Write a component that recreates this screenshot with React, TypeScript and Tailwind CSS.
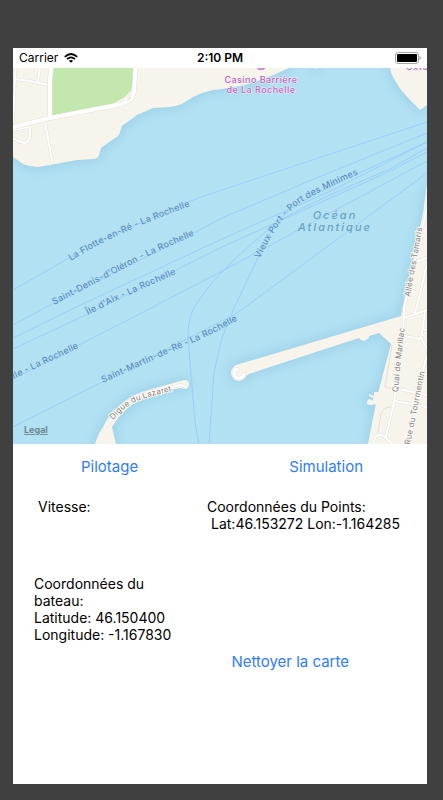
import React from "react";

const coastlines = [
  "M13 60V157L23 164Q30 167 38 167L50 165L77 160L94 159Q98 158 99 155L101 148L115 138Q119 136 120 132L122 126L137 115L153 108L170 107Q177 106 182 104L193 97Q203 92 213 90L222 89L245 85L271 76L289 68V60Z",
  "M314 60V68L316 69L318 68V60Z",
  "M390 60V68Q391 74 394 79L401 90L411 101L420 110L427 105V60Z",
  "M427 183L423 213L413 260L403 305L401 316L236 365Q231 368 231 373Q232 380 238 381Q244 381 246 376L249 374L359 338L361 340L364 341L369 338V336L379 333L391 344L378 393L368 444H427Z",
  "M95 444Q98 434 103 427Q107 418 114 411Q123 402 128 399Q135 394 145 391L184 380Q189 380 189 384Q189 389 185 389L180 388L160 392L140 400Q128 406 118 418L112 427L116 444Z",
  "M368 399L373 400V398L369 396V394L374 396V392H380L378 404L371 405Q366 405 367 402Z",
];

const ferryRoutes = [
  "M13 290L69 258Q110 236 188 202Q205 195 222 190L427 122",
  "M13 325L52 304Q100 280 194 233L222 218L314 179L427 133",
  "M13 338L72 309L222 239L333 190L427 142",
  "M13 349L90 313L222 247L388 172L427 152",
  "M13 379L79 345L157 305L222 271L427 161",
  "M13 427L102 382L234 315L248 305L427 173",
  "M199 444L195 422L190 362L188 332Q189 314 197 303Q205 290 222 272Q250 243 284 218Q320 198 388 170L427 148",
  "M209 444L214 372L222 338L234 308L256 262Q272 222 295 205L335 184L427 142",
];

const minorRoads = [
  "M16 60L15 79L13 122",
  "M15 79L30 81L48 85",
  "M38 82L40 68V60",
  "M13 130L30 127V136Q29 142 24 143Q18 142 13 138",
  "M45 121L52 161",
  "M418 261L427 258",
  "M427 263L421 290L415 313",
  "M404 318L427 310",
  "M425 312L421 338L427 348",
  "M404 336L421 339",
  "M423 329L427 330",
  "M398 389L427 395",
  "M395 401L427 407",
  "M427 355L424 366L409 444",
  "M373 444L375 438Q378 434 382 435L393 444",
  "M427 207L404 308L403 337L394 402L386 437",
];

const majorRoads = [
  "M13 127L50 118L112 106L122 104L131 99Q134 96 134 90L136 60",
  "M50 118V80L52 60",
];

const routeLabels = [
  { id: "flotte", d: "M71 261Q125 226 230 193", text: "La Flotte-en-Ré - La Rochelle" },
  { id: "denis", d: "M54 305Q90 286 125 268Q165 246 230 221", text: "Saint-Denis-d'Oléron - La Rochelle" },
  { id: "aix", d: "M88 315Q135 290 220 256", text: "Île d'Aix - La Rochelle" },
  { id: "ille", d: "M12 380Q45 363 120 329", text: "ille - La Rochelle" },
  { id: "martin", d: "M103 383Q150 361 190 344Q220 331 270 302", text: "Saint-Martin-de-Ré - La Rochelle" },
  { id: "minimes", d: "M260 259Q277 220 300 203Q320 190 385 163", text: "Vieux Port - Port des Minimes" },
];

const streetLabels = [
  { id: "lazaret", d: "M113 420Q127 404 140 400Q155 394 200 385", text: "Digue du Lazaret" },
  { id: "tamaris", d: "M410 297L426 207L430 180", text: "Allée des Tamaris" },
  { id: "marillac", d: "M398 392Q400 365 408 300", text: "Quai de Marillac" },
  { id: "tourmentin", d: "M410 445L430 345", text: "Rue du Tourmentin" },
];

function Roads({ paths, width }: { paths: string[]; width: number }) {
  return (
    <g fill="none" strokeLinejoin="round" strokeLinecap="round">
      {paths.map((d) => (
        <path key={d} d={d} stroke="#e5e0d8" strokeWidth={width + 1} />
      ))}
      {paths.map((d) => (
        <path key={d} d={d} stroke="#ffffff" strokeWidth={width} />
      ))}
    </g>
  );
}

function HarbourMap() {
  return (
    <svg
      viewBox="13 68 414 376"
      className="block w-full"
      role="img"
      aria-label="Carte de La Rochelle"
    >
      <defs>
        <filter id="shore" x="-20%" y="-20%" width="140%" height="140%">
          <feGaussianBlur stdDeviation="6" />
        </filter>
        {[...routeLabels, ...streetLabels].map((l) => (
          <path key={l.id} id={l.id} d={l.d} />
        ))}
      </defs>
      <rect x="13" y="68" width="414" height="376" fill="#b3e1f4" />
      <g filter="url(#shore)" fill="#9fd3e8" stroke="#9fd3e8" strokeWidth="7">
        {coastlines.map((d) => (
          <path key={d} d={d} />
        ))}
      </g>
      <g fill="none" stroke="#99cff5" strokeWidth="1">
        {ferryRoutes.map((d) => (
          <path key={d} d={d} />
        ))}
      </g>
      <g fill="#f7f4ec">
        {coastlines.map((d) => (
          <path key={d} d={d} />
        ))}
      </g>
      <path d="M52 60H135L133 88L125 97L112 104L52 116Z" fill="#c2e8ae" />
      <g fill="none" stroke="#e5e0d8" strokeWidth="1">
        <path d="M392 345L385 387L398 390" />
        <path d="M390 407Q382 408 381 414L378 433" />
      </g>
      <Roads paths={minorRoads} width={2} />
      <Roads paths={majorRoads} width={4} />
      <path d="M127 101L131 97V99Z" fill="#f7f4ec" stroke="#e5e0d8" strokeWidth="0.5" />
      <Roads paths={["M107 425L118 412", "M171 387L181 385L186 387"]} width={2} />
      <path
        d="M237 369Q233 370 234 375Q236 379 240 378Q244 377 244 374"
        fill="none"
        stroke="#e5e0d8"
        strokeWidth="4"
        strokeLinecap="round"
      />
      <path
        d="M237 369Q233 370 234 375Q236 379 240 378Q244 377 244 374"
        fill="none"
        stroke="#ffffff"
        strokeWidth="3"
        strokeLinecap="round"
      />

      <g className="text-[9px] font-medium tracking-wide" fill="#5b8fc0" stroke="#b3e1f4" strokeWidth="1" paintOrder="stroke">
        {routeLabels.map((l) => (
          <text key={l.id}>
            <textPath href={`#${l.id}`}>{l.text}</textPath>
          </text>
        ))}
      </g>
      <g className="text-[8px] tracking-wide" fill="#85827f" stroke="#fbf9f5" strokeWidth="2" paintOrder="stroke">
        {streetLabels.map((l) => (
          <text key={l.id}>
            <textPath href={`#${l.id}`}>{l.text}</textPath>
          </text>
        ))}
      </g>

      <g className="text-[11px] font-medium italic tracking-[2px]" textAnchor="middle" fill="#68a3bd">
        <text x="335" y="219">Océan</text>
        <text x="335" y="231">Atlantique</text>
      </g>

      <circle cx="261" cy="65" r="6" fill="#cf8fd4" stroke="#ffffff" strokeWidth="1" />
      <g className="text-[9px] font-medium tracking-wider" textAnchor="middle" fill="#b966bc" stroke="#f3eef8" strokeWidth="1" paintOrder="stroke">
        <text x="261" y="83">Casino Barrière</text>
        <text x="261" y="93">de La Rochelle</text>
        <text x="422" y="70">Oxford</text>
      </g>

      <a href="#legal">
        <text x="24" y="433" className="text-[9px] font-bold underline" fill="#6b8793">
          Legal
        </text>
      </a>
    </svg>
  );
}

function StatusBar() {
  return (
    <header className="grid h-5 grid-cols-3 items-center bg-white px-1.5 text-xs text-black">
      <div className="flex items-center gap-1.5">
        <span>Carrier</span>
        <svg width="14" height="10" viewBox="0 0 14 10" fill="none" stroke="#000" strokeWidth="1.8" aria-hidden="true">
          <path d="M0.8 3.8Q7 -1.8 13.2 3.8" />
          <path d="M3 6.2Q7 2.6 11 6.2" />
          <path d="M7 9.8L4.9 7.7Q7 6.1 9.1 7.7Z" fill="#000" stroke="none" />
        </svg>
      </div>
      <span className="text-center font-semibold">2:10 PM</span>
      <svg className="justify-self-end" width="26" height="12" viewBox="0 0 26 12" aria-hidden="true">
        <rect x="0.5" y="0.5" width="23" height="11" rx="2.5" fill="none" stroke="#a6a6a6" />
        <rect x="2" y="2" width="20" height="8" rx="1" fill="#000" />
        <path d="M24.5 4Q26 4.5 26 6Q26 7.5 24.5 8Z" fill="#a6a6a6" />
      </svg>
    </header>
  );
}

export default function App() {
  return (
    <div className="flex min-h-screen flex-col bg-[#404040] pt-12 pr-4 pb-4 pl-[13px] font-['Inter','Liberation_Sans',sans-serif]">
      <main className="flex flex-1 flex-col bg-white">
        <StatusBar />
        <HarbourMap />
        <div className="flex justify-between pt-2 pr-16 pl-17 text-[15px] leading-[30px] text-[#2f7cf6]">
          <button type="button">Pilotage</button>
          <button type="button">Simulation</button>
        </div>
        <div className="grid grid-cols-[173px_1fr] pt-4 pl-[21px] text-sm leading-[17px] text-black">
          <p className="pl-1">Vitesse:</p>
          <div>
            <p>Coordonnées du Points:</p>
            <p className="pl-1">Lat:46.153272 Lon:-1.164285</p>
          </div>
        </div>
        <div className="pt-[43px] pl-[21px] text-sm leading-[17px] text-black">
          <div className="w-36">
            <p>Coordonnées du bateau:</p>
            <p>Latitude: 46.150400</p>
            <p>Longitude: -1.167830</p>
          </div>
        </div>
        <div className="flex justify-end pt-1 pr-[78px] text-[15px] leading-[30px] text-[#2f7cf6]">
          <button type="button">Nettoyer la carte</button>
        </div>
      </main>
    </div>
  );
}
